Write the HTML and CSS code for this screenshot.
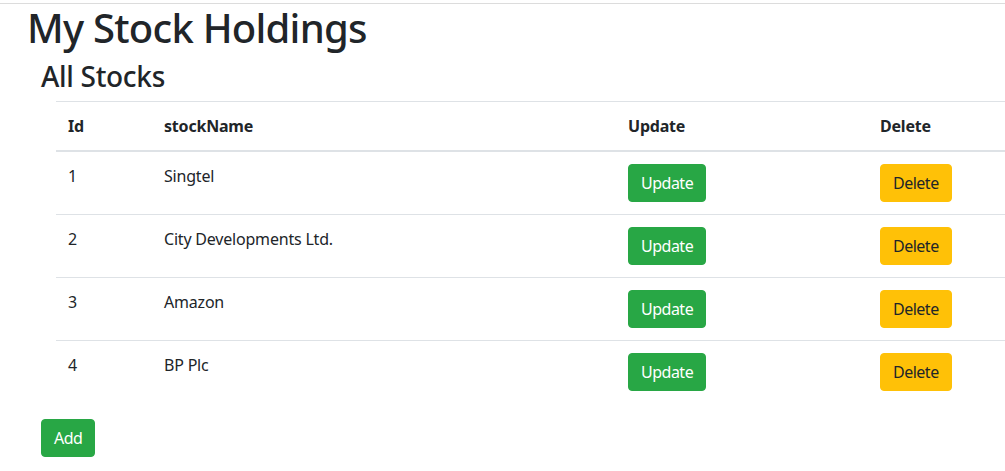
FILE: index.html
```html
<!DOCTYPE html>
<html>
<head>
<meta charset="utf-8">
<title>My Stock Holdings</title>
<link rel="stylesheet" href="styles.css">
</head>
<body>
<div class="page">
  <div class="topline"></div>
  <div class="app">
    <h1 class="title">My Stock Holdings</h1>
    <div class="section">
      <h3 class="subtitle">All Stocks</h3>
      <div class="table-wrap">
        <table class="stocks">
          <thead>
            <tr>
              <th class="c-id">Id</th>
              <th class="c-name">stockName</th>
              <th class="c-upd">Update</th>
              <th class="c-del">Delete</th>
            </tr>
          </thead>
          <tbody>
            <tr><td>1</td><td>Singtel</td><td><button class="btn btn-success">Update</button></td><td><button class="btn btn-warning">Delete</button></td></tr>
            <tr><td>2</td><td>City Developments Ltd.</td><td><button class="btn btn-success">Update</button></td><td><button class="btn btn-warning">Delete</button></td></tr>
            <tr><td>3</td><td>Amazon</td><td><button class="btn btn-success">Update</button></td><td><button class="btn btn-warning">Delete</button></td></tr>
            <tr><td>4</td><td>BP Plc</td><td><button class="btn btn-success">Update</button></td><td><button class="btn btn-warning">Delete</button></td></tr>
          </tbody>
        </table>
      </div>
      <button class="btn btn-success">Add</button>
    </div>
  </div>
</div>
</body>
</html>
```
FILE: styles.css
```css
html, body {
  margin: 0;
  padding: 0;
  background: #fff;
}
body {
  font-family: "Noto Sans", "Open Sans", sans-serif;
  font-size: 16px;
  line-height: 1.5;
  color: #212529;
}
.page {
  width: 1005px;
  overflow: hidden;
  padding-top: 3px;
}
.topline {
  border-top: 1px solid #dcdcdc;
}
.app {
  padding-left: 27px;
}
.title {
  margin: 0 0 8px 0;
  font-size: 40px;
  font-weight: 500;
  line-height: 1.2;
  letter-spacing: -0.75px;
}
.section {
  padding-left: 14px;
}
.subtitle {
  margin: 0 0 7px 0;
  font-size: 28px;
  font-weight: 500;
  line-height: 1.2;
  letter-spacing: -0.3px;
}
.table-wrap {
  padding-left: 15px;
}
.stocks {
  border-collapse: collapse;
  width: 1064px;
  margin-bottom: 16px;
  table-layout: fixed;
}
.stocks th, .stocks td {
  padding: 12px;
  text-align: left;
  vertical-align: top;
  border-top: 1px solid #dee2e6;
}
.stocks td {
  letter-spacing: -0.2px;
}
.stocks thead th {
  vertical-align: bottom;
  border-bottom: 2px solid #dee2e6;
  font-weight: 700;
  letter-spacing: -0.2px;
}
.c-id { width: 72px; }
.c-name { width: 440px; }
.c-upd { width: 228px; }
.c-del { width: 228px; }
.btn {
  display: inline-block;
  font-family: inherit;
  font-size: 16px;
  line-height: 1.5;
  padding: 6px 12px;
  border: 1px solid transparent;
  border-radius: 4px;
  cursor: pointer;
  margin: 0;
  letter-spacing: -0.5px;
}
.btn-success {
  background: #28a745;
  border-color: #28a745;
  color: #fff;
}
.btn-warning {
  background: #ffc107;
  border-color: #ffc107;
  color: #212529;
}
```
